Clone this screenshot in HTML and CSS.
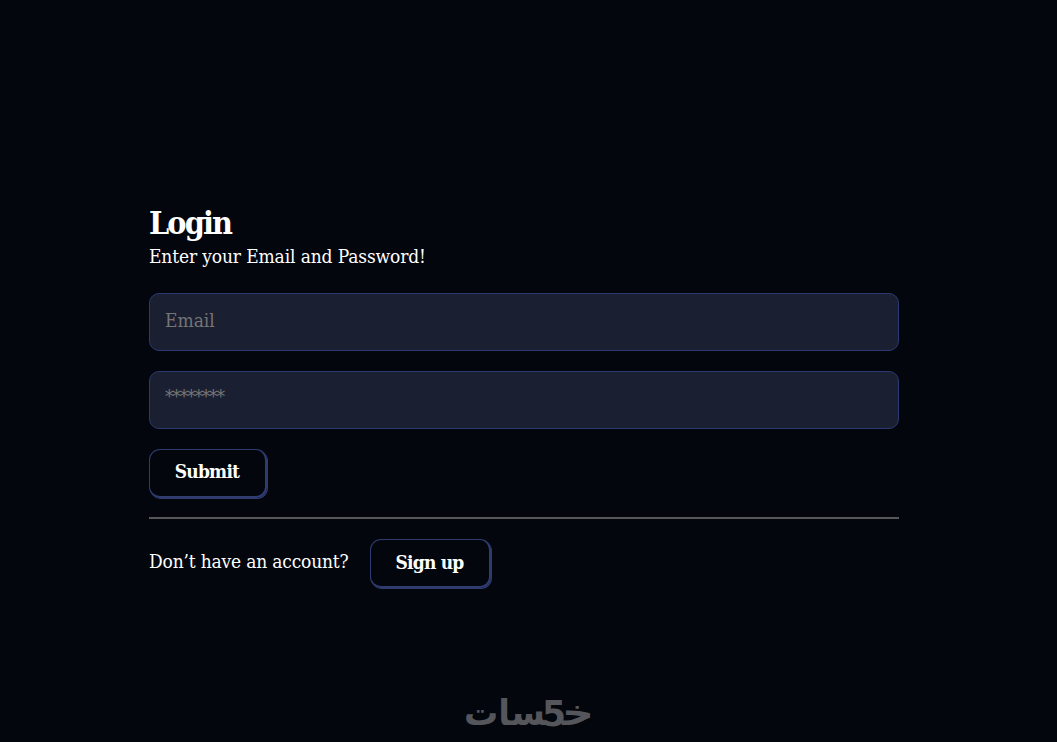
FILE: index.html
```html
<!DOCTYPE html>
<html lang="en">
<head>
    <meta charset="UTF-8">
    <meta name="viewport" content="width=device-width, initial-scale=1.0">
    <title>Login</title>
    <link rel="stylesheet" href="styles.css">
</head>
<body>
    <div class="container">
        <h1>Login</h1>
        <p class="intro">Enter your Email and Password!</p>
        <form id="loginForm">
            <input type="email" name="email" placeholder="Email">
            <input class="pass" type="password" name="password" placeholder="********">
            <button type="submit">Submit</button>
        </form>
        <hr>
        <div class="signup">
            <p>Don’t have an account?</p>
            <button class="up" type="button">Sign up</button>
        </div>
    </div>
    <footer>
        <svg class="logo" width="128" height="50" viewBox="0 0 128 50">
            <text x="-1" y="37" textLength="82" lengthAdjust="spacingAndGlyphs">&#x200D;سات</text>
            <text class="five" x="77" y="38" textLength="24" lengthAdjust="spacingAndGlyphs">5</text>
            <text x="97" y="37" textLength="32" lengthAdjust="spacingAndGlyphs">خ&#x200D;</text>
        </svg>
    </footer>
</body>
</html>
```
FILE: styles.css
```css
*{
    box-sizing: border-box;
}
body{
    background-color: #03060d;
    color: white;
    margin: 0;
    height: 742px;
    overflow: hidden;
    font-family: "DejaVu Serif Condensed", "DejaVu Serif", serif;
    font-stretch: condensed;
    font-size: 19px;
    display: flex;
    flex-direction: column;
    align-items: center;
}
.container{
    width: 750px;
    margin-top: 202px;
    margin-right: 9px;
}
h1{
    font-size: 32px;
    line-height: 42px;
    letter-spacing: -1.9px;
    margin: 0;
}
p{
    margin: 0;
}
.intro{
    line-height: 24px;
    letter-spacing: -0.13px;
    margin-bottom: 25px;
}
form{
    display: flex;
    flex-direction: column;
    align-items: flex-start;
    gap: 20px;
}
input{
    width: 100%;
    height: 58px;
    background-color: #1b1f32;
    border: solid 1px #2b3a70;
    border-radius: 10px;
    padding: 0 15px 4px;
    color: white;
    font: inherit;
}
input::placeholder{
    color: #757575;
}
.pass{
    letter-spacing: -1.2px;
    padding-bottom: 8px;
}
button{
    width: 118px;
    height: 49px;
    background-color: transparent;
    border: solid 1px #303b70;
    border-right-width: 2px;
    border-bottom-width: 2px;
    border-radius: 11px;
    box-shadow: 1px 1px 0 #303b70;
    color: white;
    font: inherit;
    font-weight: bold;
    letter-spacing: -0.8px;
    padding: 0 1px 4px 0;
}
hr{
    border: none;
    height: 2px;
    background-color: #555759;
    margin: 19px 0 20px;
}
.signup{
    display: flex;
    gap: 22px;
    line-height: 45px;
}
.signup p{
    width: 199px;
    letter-spacing: -0.18px;
    white-space: nowrap;
}
.up{
    width: 121px;
    padding-bottom: 5px;
}
footer{
    margin-top: 100px;
}
.logo{
    display: block;
    overflow: visible;
    fill: #55565b;
    font-family: "DejaVu Sans", sans-serif;
    font-size: 36px;
    font-weight: bold;
}
.five{
    font-size: 35px;
}
```
